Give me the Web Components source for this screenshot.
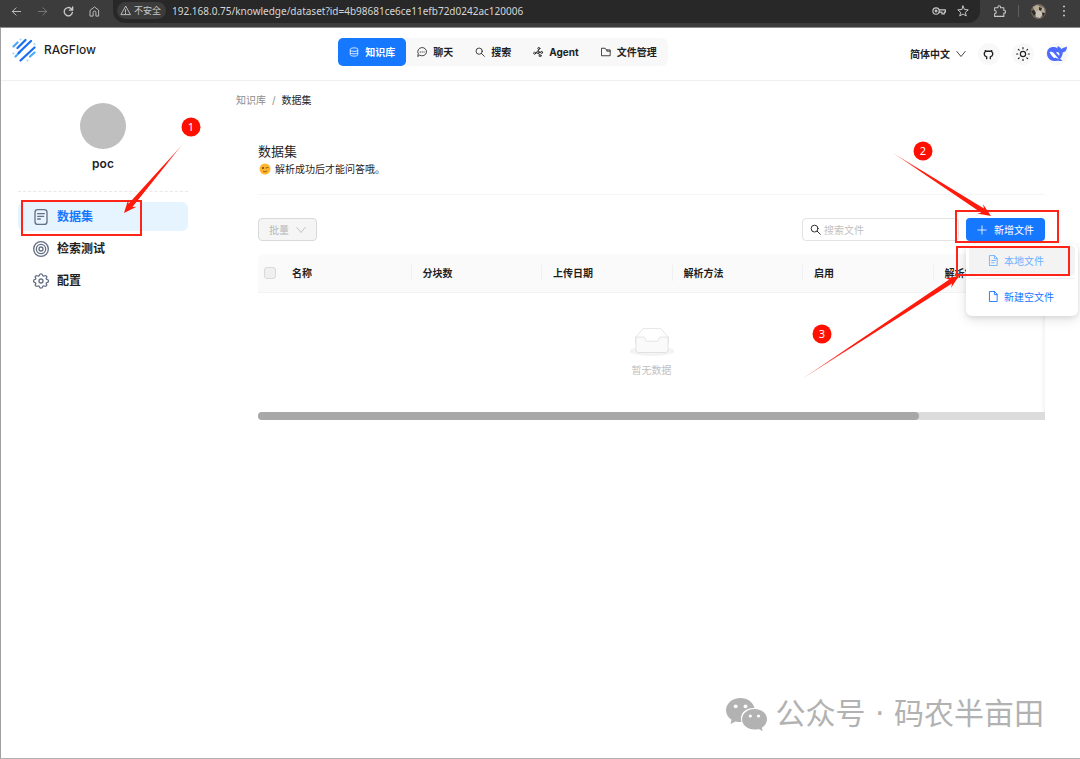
<!DOCTYPE html>
<html lang="zh-CN">
<head>
<meta charset="UTF-8">
<meta name="viewport" content="width=device-width, initial-scale=1.0">
<title>RAGFlow</title>
<style>
    body {
        margin: 0;
        background: #fff;
        color: #1f1f1f;
        font-family: Inter, "Noto Sans CJK SC", sans-serif;
        font-size: 10px;
        line-height: 16px;
    }
</style>
</head>
<body>
<rag-app></rag-app>

<script>
const icons = {
    back: '<path d="M21 12H3M11 4l-8 8 8 8"/>',
    forward: '<path d="M3 12h18M13 4l8 8-8 8"/>',
    reload: '<path d="M20.500 14a9 9 0 1 1-2.500-8L21 9M21 2v7h-7"/>',
    home: '<path d="M3 9l9-7 9 7v13h-6v-8a3 3 0 0 0-6 0v8H3z"/>',
    warning: '<path d="M12 3L2 21h20zM12 10v5M12 17v2"/>',
    key: '<circle cx="7" cy="12" r="5.500"/><circle cx="7" cy="12" r="1.500"/><path d="M12 10h11v4h-2v3h-4v-3h-5"/>',
    star: '<path d="M12 2l2.900 7 7.600.7-5.800 5 1.800 7.300-6.500-4-6.500 4 1.800-7.300-5.800-5L9.100 9z"/>',
    puzzle: '<path d="M3 5h6V4a2.500 2.500 0 0 1 5 0v1h6v5h1a2.500 2.500 0 0 1 0 5h-1v6H3v-5a3 3 0 0 0 0-6z"/>',
    dots: '<g fill="currentColor" stroke="none"><circle cx="12" cy="3" r="2"/><circle cx="12" cy="12" r="2"/><circle cx="12" cy="21" r="2"/></g>',
    database: '<path d="M3 5c0-4 18-4 18 0v14c0 4-18 4-18 0zM3 9c2 2 16 2 18 0M3 15c2 2 16 2 18 0"/>',
    chat: '<path d="M2 22l1-6a10.500 10 0 1 1 4 4z"/><path d="M7.500 12h1M12 12h1M16.500 12h1"/>',
    search: '<circle cx="10" cy="10" r="7.500"/><path d="M15.500 15.500l7 7"/>',
    agent: '<circle cx="4" cy="15" r="2.500"/><circle cx="14" cy="3.500" r="2.500"/><circle cx="21" cy="13" r="2.500"/><circle cx="17" cy="21" r="2.500"/><circle cx="12" cy="12.500" r="3"/><path d="M6.500 14.500L9 13.500M12.500 9.500L13.500 6M15 12.500h3.500M13.500 15l2 4"/>',
    folder: '<path d="M2 3h8l3 4h9v14H2zM14 7v3h8"/>',
    down: '<path d="M2 6l10 12L22 6"/>',
    github: '<path d="M8 21v-4C1 15 2 8 5 6V3.500L8.500 5h7L19 3.500V6c3 2 4 9-3 11v4"/>',
    sun: '<circle cx="12" cy="12" r="4.500"/><path d="M12 1v2M12 21v2M1 12h2M21 12h2M4 4l1.500 1.500M18.500 18.500L20 20M4 20l1.500-1.500M18.500 5.500L20 4"/>',
    doc: '<rect x="3" y="1" width="18" height="22" rx="4"/><path d="M7 7h10M7 11h9M7 15h4"/>',
    target: '<circle cx="12" cy="12" r="11"/><circle cx="12" cy="12" r="7"/><circle cx="12" cy="12" r="3"/>',
    gear: '<path d="M9.500 3.500C10 .5 14 .5 14.500 3.500c.5 1.500 1.500 1.500 2.500 1 3-1.500 4.500 1 3 3-.5 1 0 2 1 2.200 3 .8 3 4 0 4.600-1 .2-1.500 1.200-1 2.200 1.500 2-.5 4.500-3 3-1-.5-2 0-2.500 1-.5 3-4.500 3-5 0-.5-1-1.500-1.500-2.500-1-2.500 1.500-4.500-1-3-3 .5-1 0-2-1-2.200-3-.6-3-3.800 0-4.600 1-.2 1.500-1.200 1-2.200-1.500-2 0-4.500 3-3 1 .5 2 .5 2.500-1z"/><circle cx="12" cy="12" r="3"/>',
    plus: '<path d="M12 2v20M2 12h20"/>',
    file: '<path d="M4 1h10l6 6v16H4zM14 1v7h6"/>',
    fileText: '<path d="M4 1h10l6 6v16H4zM14 1v7h6M8 12h8M8 17h5"/>'
};

function icon(name, size, stroke = 2) {
    return `<svg width="${size}" height="${size}" viewBox="0 0 24 24" fill="none" stroke="currentColor"
        stroke-width="${stroke}" stroke-linecap="round" stroke-linejoin="round" aria-hidden="true">${icons[name]}</svg>`;
}

class BrowserBar extends HTMLElement {
    connectedCallback() {
        this.attachShadow({ mode: 'open' });
        this.shadowRoot.innerHTML = `
            <style>
                :host {
                    display: flex;
                    align-items: flex-start;
                    height: 28px;
                    padding: 0 10px;
                    background: #3c3c3c;
                    border-bottom: 1px solid #8c8c8c;
                    color: #c7c7c7;
                    box-sizing: border-box;
                }
                button {
                    display: flex;
                    align-items: center;
                    justify-content: center;
                    width: 26px;
                    height: 22px;
                    padding: 0;
                    border: 0;
                    background: none;
                    color: inherit;
                }
                .tools { display: flex; margin-left: -7px; }
                .tools button:nth-child(2) { color: #7c7c7c; }
                .address {
                    flex: 1;
                    display: flex;
                    align-items: center;
                    gap: 6px;
                    height: 23px;
                    margin-left: 6px;
                    padding: 0 8px 2px 4px;
                    border-radius: 0 0 12px 12px;
                    background: #282828;
                    box-sizing: border-box;
                }
                .chip {
                    display: flex;
                    align-items: center;
                    gap: 3px;
                    height: 17px;
                    padding: 0 5px 0 3px;
                    border-radius: 9px;
                    background: #3c3c3c;
                    font-size: 9px;
                    white-space: nowrap;
                }
                input {
                    flex: 1;
                    min-width: 0;
                    padding: 0;
                    border: 0;
                    background: none;
                    color: #d6d6d6;
                    font: 10px/20px "Noto Sans", sans-serif;
                }
                .address button { width: 18px; }
                .end { display: flex; align-items: center; gap: 7px; margin: 0 -1px 0 7px; }
                .end button { width: 24px; }
                .end button:last-child { width: 14px; }
                .end i { width: 1px; height: 12px; background: #5e5e5e; }
            </style>
            <div class="tools">
                <button aria-label="后退">${icon('back', 11)}</button>
                <button aria-label="前进">${icon('forward', 11)}</button>
                <button aria-label="刷新">${icon('reload', 11, 3)}</button>
                <button aria-label="主页">${icon('home', 11)}</button>
            </div>
            <div class="address">
                <span class="chip">${icon('warning', 11)}不安全</span>
                <input aria-label="地址" value="192.168.0.75/knowledge/dataset?id=4b98681ce6ce11efb72d0242ac120006">
                <button aria-label="密码">${icon('key', 14)}</button>
                <button aria-label="收藏">${icon('star', 12)}</button>
            </div>
            <div class="end">
                <button aria-label="扩展">${icon('puzzle', 13)}</button>
                <i></i>
                <button aria-label="用户">
                    <svg width="15" height="15" viewBox="0 0 15 15" aria-hidden="true">
                        <circle cx="7.500" cy="7.500" r="7.500" fill="#75695d"/>
                        <path d="M2 3l4-2 7 3 1 5-5-2-4 3z" fill="#b7ad98"/>
                        <path d="M4 8l5-2 3 4-3 4-4-1z" fill="#c9c5bb"/>
                        <path d="M0 7l3-1 2 3-2 3zM8 3l3 1-1 3-2-1zM11 9l3 0-2 4z" fill="#322c29"/>
                    </svg>
                </button>
                <button aria-label="菜单">${icon('dots', 12)}</button>
            </div>
        `;
    }
}
customElements.define('browser-bar', BrowserBar);

class NavItem extends HTMLElement {
    connectedCallback() {
        this.attachShadow({ mode: 'open' });
        this.shadowRoot.innerHTML = `
            <style>
                :host { display: block; }
                a {
                    display: flex;
                    align-items: center;
                    gap: 6px;
                    height: 28px;
                    padding: 0 11px;
                    border-radius: 5px;
                    color: #1f1f1f;
                    font-weight: 700;
                    text-decoration: none;
                    white-space: nowrap;
                }
                :host([active]) a { background: #1677ff; color: #fff; }
            </style>
            <a href="#">${icon(this.getAttribute('icon'), 10)}<slot></slot></a>
        `;
    }
}
customElements.define('nav-item', NavItem);

class AppHeader extends HTMLElement {
    connectedCallback() {
        this.attachShadow({ mode: 'open' });
        this.shadowRoot.innerHTML = `
            <style>
                :host {
                    display: flex;
                    align-items: flex-start;
                    justify-content: space-between;
                    height: 53px;
                    padding: 10px 12px 0 11px;
                    border-bottom: 1px solid #f0f0f0;
                    box-sizing: border-box;
                }
                .brand {
                    display: flex;
                    align-items: center;
                    gap: 8px;
                    height: 24px;
                    color: #1f1f1f;
                    font-size: 12px;
                    font-weight: 500;
                    text-decoration: none;
                }
                nav {
                    display: flex;
                    border-radius: 6px;
                    background: #f8f8f8;
                }
                .right { display: flex; align-items: center; gap: 12px; height: 32px; }
                button {
                    display: flex;
                    align-items: center;
                    justify-content: center;
                    width: 22px;
                    height: 22px;
                    padding: 0;
                    border: 0;
                    border-radius: 50%;
                    background: #f8f8f8;
                    color: #1f1f1f;
                    font: inherit;
                }
                .lang { width: auto; gap: 6px; background: none; font-weight: 700; white-space: nowrap; }
            </style>
            <a class="brand" href="#">
                <svg width="24" height="24" viewBox="0 0 24 24" fill="none" stroke-width="2.200" stroke-linecap="round" aria-hidden="true">
                    <path d="M8.500 1.500h.1M1.500 15.500h.1M15.500 22.500h.1M22.500 6h.1" stroke="#a5d8ff"/>
                    <path d="M1.500 8.500l4-4M3.500 18.500l4.500-4.500M18 18.500l4.500-4" stroke="#4ba9fb"/>
                    <path d="M5.500 10l8-8M6.500 15l12.500-12M8.500 22.500l14-13" stroke="#1a6cf0"/>
                </svg>
                RAGFlow
            </a>
            <nav>
                <nav-item icon="database" active>知识库</nav-item>
                <nav-item icon="chat">聊天</nav-item>
                <nav-item icon="search">搜索</nav-item>
                <nav-item icon="agent">Agent</nav-item>
                <nav-item icon="folder">文件管理</nav-item>
            </nav>
            <div class="right">
                <button class="lang">简体中文${icon('down', 10)}</button>
                <button aria-label="GitHub">${icon('github', 11, 3)}</button>
                <button aria-label="主题">${icon('sun', 14)}</button>
                <button aria-label="用户设置">
                    <svg width="20" height="16" viewBox="0 0 20 16" aria-hidden="true">
                        <path d="M0 7.500C0 3 3 1 6.500 1c2 0 3 .5 4 1.500C10.200 1.500 10.500.5 11 0c1 1 2.500 1.500 3.500 3.200C15.500 1.700 17.500 2 20 .5c0 3.500-1.500 5.500-4.200 6C15.500 9.500 14.500 11.500 13 13l2.500 1.500c-2 1-3.500.5-4.500 0C6 16.500 0 13.500 0 7.500z" fill="#4d6bfe"/>
                        <path d="M2.500 6c2-1 4 .2 5.500 2.500 1.500 2 2.500 3 4 4-1.500.3-2.500 0-3.500-1-.5 1-2 .5-3-1C4 9 3.500 7.500 2.500 6zM9 6.500c1.200-1 2.500-.5 3.200.7.5 1 .3 2-.5 2.300C11 8.500 10 7.500 9 6.500z" fill="#fff"/>
                    </svg>
                </button>
            </div>
        `;
    }
}
customElements.define('app-header', AppHeader);

class SideItem extends HTMLElement {
    connectedCallback() {
        this.attachShadow({ mode: 'open' });
        this.shadowRoot.innerHTML = `
            <style>
                :host { display: block; }
                a {
                    display: flex;
                    align-items: center;
                    gap: 8px;
                    height: 29px;
                    padding: 0 15px;
                    border-radius: 6px;
                    color: #1f1f1f;
                    font-size: 12px;
                    font-weight: 600;
                    text-decoration: none;
                }
                svg { color: #667085; }
                :host([active]) a { background: #e6f4ff; color: #1677ff; }
            </style>
            <a href="#">${icon(this.getAttribute('icon'), 16)}<slot></slot></a>
        `;
    }
}
customElements.define('side-item', SideItem);

class SideBar extends HTMLElement {
    connectedCallback() {
        this.attachShadow({ mode: 'open' });
        this.shadowRoot.innerHTML = `
            <style>
                :host {
                    display: flex;
                    flex-direction: column;
                    flex: none;
                    width: 170px;
                    padding: 22px 18px 0 17px;
                }
                .avatar {
                    align-self: center;
                    width: 46px;
                    height: 46px;
                    border-radius: 50%;
                    background: #bfbfbf;
                }
                .name {
                    margin-top: 5px;
                    font-size: 12px;
                    font-weight: 600;
                    line-height: 20px;
                    text-align: center;
                }
                nav {
                    display: flex;
                    flex-direction: column;
                    gap: 3px;
                    margin-top: 17px;
                    padding-top: 10px;
                    border-top: 1px dashed #e8e8e8;
                }
            </style>
            <div class="avatar"></div>
            <div class="name">poc</div>
            <nav>
                <side-item icon="doc" active>数据集</side-item>
                <side-item icon="target">检索测试</side-item>
                <side-item icon="gear">配置</side-item>
            </nav>
        `;
    }
}
customElements.define('side-bar', SideBar);

class AddFile extends HTMLElement {
    connectedCallback() {
        this.attachShadow({ mode: 'open' });
        this.shadowRoot.innerHTML = `
            <style>
                :host { display: block; position: relative; }
                button {
                    display: flex;
                    align-items: center;
                    border: 0;
                    font: inherit;
                    white-space: nowrap;
                }
                .add {
                    gap: 7px;
                    height: 23px;
                    padding: 0 11px;
                    border-radius: 4px;
                    background: #1677ff;
                    color: #fff;
                }
                .menu {
                    position: absolute;
                    z-index: 2;
                    top: 26px;
                    left: 0;
                    width: 112px;
                    padding: 2px 3px 5px;
                    border-radius: 6px;
                    background: #fff;
                    box-shadow: 0 4px 12px rgba(0, 0, 0, 0.1), 0 2px 4px rgba(0, 0, 0, 0.08);
                    box-sizing: border-box;
                }
                .menu button {
                    gap: 5px;
                    width: 100%;
                    height: 29px;
                    padding: 0 19px;
                    border-radius: 3px;
                    background: none;
                    color: #1677ff;
                }
                .menu .hover { background: #f3f3f3; color: #69b1ff; }
                hr { height: 1px; margin: 3px 0; border: 0; background: #f0f0f0; }
            </style>
            <button class="add">${icon('plus', 10)}新增文件</button>
            <div class="menu">
                <button class="hover">${icon('fileText', 11)}本地文件</button>
                <hr>
                <button>${icon('file', 11)}新建空文件</button>
            </div>
        `;
    }
}
customElements.define('add-file', AddFile);

class FileTable extends HTMLElement {
    connectedCallback() {
        const columns = ['名称', '分块数', '上传日期', '解析方法', '启用', '解析状态', ''];
        this.attachShadow({ mode: 'open' });
        this.shadowRoot.innerHTML = `
            <style>
                :host {
                    display: block;
                    overflow: hidden;
                    border-radius: 6px 6px 0 0;
                    box-shadow: inset -4px 0 4px -3px rgba(0, 0, 0, 0.08);
                }
                table {
                    width: 119%;
                    border-spacing: 0;
                    table-layout: fixed;
                }
                th {
                    height: 38px;
                    padding: 0;
                    background: #fafafa;
                    border-bottom: 1px solid #f3f3f3;
                    text-align: left;
                    font-weight: 700;
                }
                th:first-child { width: 23px; }
                th span {
                    display: block;
                    padding-left: 11px;
                    border-right: 1px solid #f0f0f0;
                }
                input {
                    display: block;
                    appearance: none;
                    width: 12px;
                    height: 12px;
                    margin: 0 auto;
                    border: 1px solid #d9d9d9;
                    border-radius: 3px;
                    background: #f0f0f0;
                }
                .empty {
                    display: flex;
                    flex-direction: column;
                    align-items: center;
                    gap: 6px;
                    padding: 35px 0 34px;
                    color: #bfbfbf;
                }
                .track { height: 8px; border-radius: 4px 0 0 4px; background: #dcdcdc; }
                .thumb { width: 84%; height: 8px; border-radius: 4px; background: #a8a8a8; }
            </style>
            <table>
                <thead>
                    <tr>
                        <th><input type="checkbox" aria-label="全选" disabled></th>
                        ${columns.map((name) => `<th><span>${name}</span></th>`).join('')}
                    </tr>
                </thead>
            </table>
            <div class="empty">
                <svg width="46" height="28" viewBox="0 0 64 40" aria-hidden="true">
                    <ellipse cx="32" cy="33" rx="32" ry="7" fill="#f3f3f3"/>
                    <g stroke="#d9d9d9">
                        <path d="M55 12.800L44.900 1.300C44.400.5 43.700 0.500 42.900 0.500H21.100c-.8 0-1.500 0-2 .8L9 12.800V22h46z" fill="#fff"/>
                        <path d="M41.600 16c0-1.600 1-3 2.200-3H55v18.100c0 2.200-1.300 3.900-3 3.900H12c-1.700 0-3-1.700-3-3.900V13h11.200c1.200 0 2.200 1.300 2.200 3 0 1.600 1 2.900 2.200 2.900h14.800c1.200 0 2.200-1.300 2.200-2.900z" fill="#fafafa"/>
                    </g>
                </svg>
                暂无数据
            </div>
            <div class="track"><div class="thumb"></div></div>
        `;
    }
}
customElements.define('file-table', FileTable);

class DatasetPage extends HTMLElement {
    connectedCallback() {
        this.attachShadow({ mode: 'open' });
        this.shadowRoot.innerHTML = `
            <style>
                :host {
                    display: block;
                    flex: 1;
                    min-width: 0;
                    padding: 11px 35px 0 30px;
                }
                .crumbs { display: flex; gap: 6px; color: #8c8c8c; }
                .crumbs a { color: inherit; text-decoration: none; }
                .crumbs b { color: #1f1f1f; font-weight: 400; }
                section { margin: 33px 0 0 22px; }
                h1 { margin: 0; font-size: 13px; font-weight: 400; line-height: 20px; }
                p {
                    display: flex;
                    align-items: center;
                    gap: 4px;
                    margin: 0;
                    padding: 0 1px 17px;
                    border-bottom: 1px solid #f5f5f5;
                }
                .toolbar {
                    display: flex;
                    align-items: center;
                    gap: 7px;
                    margin: 23px 0 13px;
                }
                .batch {
                    display: flex;
                    align-items: center;
                    gap: 7px;
                    height: 23px;
                    margin-right: auto;
                    padding: 0 10px;
                    border: 1px solid #d9d9d9;
                    border-radius: 4px;
                    background: #f5f5f5;
                    color: #b8b8b8;
                    font: inherit;
                }
                label {
                    display: flex;
                    align-items: center;
                    gap: 3px;
                    width: 157px;
                    height: 23px;
                    padding: 0 7px;
                    border: 1px solid #e3e3e3;
                    border-radius: 4px;
                    box-sizing: border-box;
                }
                input {
                    flex: 1;
                    min-width: 0;
                    padding: 0;
                    border: 0;
                    background: none;
                    font: inherit;
                }
                input::placeholder { color: #bfbfbf; }
            </style>
            <div class="crumbs"><a href="#">知识库</a><span>/</span><b>数据集</b></div>
            <section>
                <h1>数据集</h1>
                <p>
                    <svg width="12" height="12" viewBox="0 0 12 12" fill="none" stroke="#69401a" stroke-linecap="round" aria-hidden="true">
                        <circle cx="6" cy="6" r="5.500" fill="#ffb62e" stroke="none"/>
                        <circle cx="4" cy="5" r="1" fill="#69401a" stroke="none"/>
                        <path d="M7 5l2-.5M4.500 8.500c1 .5 2.500.5 3.500-.5" stroke-width="0.800"/>
                    </svg>
                    <span>解析成功后才能问答哦。</span>
                </p>
                <div class="toolbar">
                    <button class="batch" disabled>批量${icon('down', 10)}</button>
                    <label>${icon('search', 11)}<input type="text" placeholder="搜索文件" aria-label="搜索文件"></label>
                    <add-file></add-file>
                </div>
                <file-table></file-table>
            </section>
        `;
    }
}
customElements.define('dataset-page', DatasetPage);

// Step markers drawn over the page: boxes, tapered arrows and numbered dots
class StepMarks extends HTMLElement {
    connectedCallback() {
        const steps = [
            { box: [22, 201, 119, 34], from: [182, 145], to: [124, 213], dot: [191, 127] },
            { box: [956, 211, 102, 31], from: [893, 153], to: [991, 216], dot: [923, 151] },
            { box: [957, 247, 112, 28], from: [802, 379], to: [959, 276], dot: [822, 334] }
        ];
        this.attachShadow({ mode: 'open' });
        this.shadowRoot.innerHTML = `
            <style>
                :host {
                    position: absolute;
                    z-index: 5;
                    top: 0;
                    left: 0;
                    pointer-events: none;
                }
                svg { display: block; }
                text {
                    fill: #fff;
                    font: 11px/1 "Noto Sans", sans-serif;
                    text-anchor: middle;
                }
            </style>
            <svg width="1080" height="420" viewBox="0 0 1080 420">
                ${steps.map((step, i) => this.mark(step, i + 1)).join('')}
            </svg>
        `;
    }

    mark({ box, from, to, dot }, n) {
        const length = Math.hypot(to[0] - from[0], to[1] - from[1]);
        const ux = (to[0] - from[0]) / length;
        const uy = (to[1] - from[1]) / length;
        // point at a distance back from the tip, shifted sideways
        const at = (back, side) => `${to[0] - ux * back - uy * side},${to[1] - uy * back + ux * side}`;
        const points = [at(length, 0), at(10, 2.5), at(13, 5.5), at(0, 0), at(13, -5.5), at(10, -2.5)].join(' ');
        return `
            <linearGradient id="fade${n}" gradientUnits="userSpaceOnUse" x1="${from[0]}" y1="${from[1]}" x2="${to[0]}" y2="${to[1]}">
                <stop offset="0" stop-color="#ff1a0c" stop-opacity="0.500"/>
                <stop offset="0.300" stop-color="#ff1a0c"/>
            </linearGradient>
            <rect x="${box[0]}" y="${box[1]}" width="${box[2]}" height="${box[3]}" fill="none" stroke="#ff2418" stroke-width="2"/>
            <polygon points="${points}" fill="url(#fade${n})"/>
            <circle cx="${dot[0]}" cy="${dot[1]}" r="9.500" fill="#ff0f00"/>
            <text x="${dot[0]}" y="${dot[1] + 4}">${n}</text>
        `;
    }
}
customElements.define('step-marks', StepMarks);

class AccountMark extends HTMLElement {
    connectedCallback() {
        this.attachShadow({ mode: 'open' });
        this.shadowRoot.innerHTML = `
            <style>
                :host {
                    position: absolute;
                    right: 36px;
                    bottom: 24px;
                    display: flex;
                    align-items: center;
                    gap: 8px;
                    color: #b2b2b2;
                    font-family: "DejaVu Sans", "Noto Sans CJK SC", sans-serif;
                    font-size: 30px;
                    line-height: 40px;
                    white-space: nowrap;
                }
            </style>
            <svg width="41" height="34" viewBox="0 0 41 34" aria-hidden="true">
                <path d="M14.500 1C6.500 1 0 6.500 0 13.300c0 4 2.200 7.300 5.600 9.500L4.500 27l5-2.600c2 .5 3.800.8 6 .7C13 17 19 10.600 28.500 11 27 5 21.500 1 14.500 1z" fill="currentColor"/>
                <path d="M28.500 12C21.500 12 16 16.600 16 22.300s5.500 10.300 12.500 10.300c1.500 0 3-.2 4.300-.6l4 2.200-1-3.500c3.200-1.900 5.200-4.900 5.200-8.400C41 16.600 35.500 12 28.500 12z" fill="currentColor"/>
                <g fill="#fff"><circle cx="9.700" cy="9.300" r="1.900"/><circle cx="19.500" cy="9.300" r="1.900"/><circle cx="24.300" cy="19" r="1.600"/><circle cx="32.500" cy="19" r="1.600"/></g>
            </svg>
            <span>公众号 · 码农半亩田</span>
        `;
    }
}
customElements.define('account-mark', AccountMark);

class RagApp extends HTMLElement {
    connectedCallback() {
        this.attachShadow({ mode: 'open' });
        this.shadowRoot.innerHTML = `
            <style>
                :host {
                    display: flex;
                    flex-direction: column;
                    position: relative;
                    min-height: 100vh;
                    overflow: hidden;
                    box-sizing: border-box;
                    border-bottom: 1px solid #b0b0b0;
                }
                .page {
                    flex: 1;
                    border-left: 1px solid #a0a0a0;
                }
                .body { display: flex; }
            </style>
            <browser-bar></browser-bar>
            <div class="page">
                <app-header></app-header>
                <div class="body">
                    <side-bar></side-bar>
                    <dataset-page></dataset-page>
                </div>
            </div>
            <step-marks></step-marks>
            <account-mark></account-mark>
        `;
    }
}
customElements.define('rag-app', RagApp);
</script>
</body>
</html>
